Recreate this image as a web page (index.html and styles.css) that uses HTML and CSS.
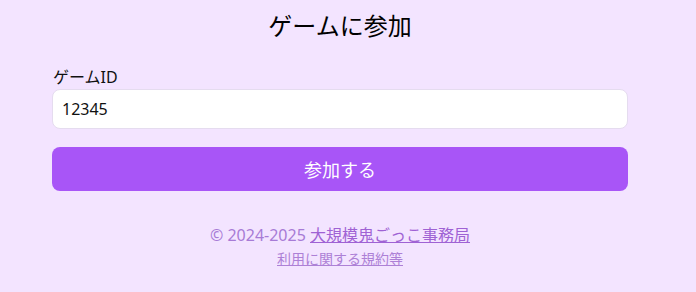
FILE: index.html
```html
<!DOCTYPE html>
<html lang="ja">
<head>
<meta charset="utf-8">
<title>ゲームに参加</title>
<link rel="stylesheet" href="styles.css">
</head>
<body>
<main class="page">
  <h1 class="title">ゲームに参加</h1>
  <form class="form">
    <label class="label" for="gid">ゲームID</label>
    <input class="input" id="gid" type="text" value="12345">
    <button class="btn" type="button">参加する</button>
  </form>
  <footer class="footer">
    <p class="copy">© 2024-2025 <a class="link" href="#">大規模鬼ごっこ事務局</a></p>
    <p class="terms"><a class="link link-sub" href="#">利用に関する規約等</a></p>
  </footer>
</main>
</body>
</html>
```
FILE: styles.css
```css
html, body {
  margin: 0;
  padding: 0;
  background: #f3e4ff;
}
body {
  font-family: "Noto Sans", "Noto Sans CJK JP", sans-serif;
  color: #111;
}
.page {
  width: 576px;
  margin-left: 52px;
  display: flex;
  flex-direction: column;
}
.title {
  margin: 10px 0 0;
  font-size: 24px;
  font-weight: 400;
  line-height: 32px;
  text-align: center;
  color: #000;
}
.form {
  display: flex;
  flex-direction: column;
  margin-top: 24px;
}
.label {
  font-size: 16px;
  line-height: 22px;
  padding-left: 1px;
  margin-bottom: 1px;
}
.input {
  box-sizing: border-box;
  height: 40px;
  width: 100%;
  border: 1px solid #e5dcef;
  border-radius: 8px;
  background: #fff;
  padding: 0 9px;
  font-family: inherit;
  font-size: 16px;
  color: #111;
  outline: none;
}
.btn {
  margin-top: 18px;
  height: 44px;
  width: 100%;
  border: 0;
  border-radius: 8px;
  background: #a855f7;
  color: #fff;
  font-family: inherit;
  font-size: 18px;
  cursor: pointer;
}
.footer {
  margin-top: 32px;
  text-align: center;
  color: #a77bd6;
}
.copy {
  margin: 0;
  font-size: 16px;
  line-height: 24px;
}
.terms {
  margin: 0;
  font-size: 14px;
  line-height: 24px;
}
.link {
  color: #9f62d4;
  text-decoration: underline;
}
.link-sub {
  color: #ad80d6;
}
```
